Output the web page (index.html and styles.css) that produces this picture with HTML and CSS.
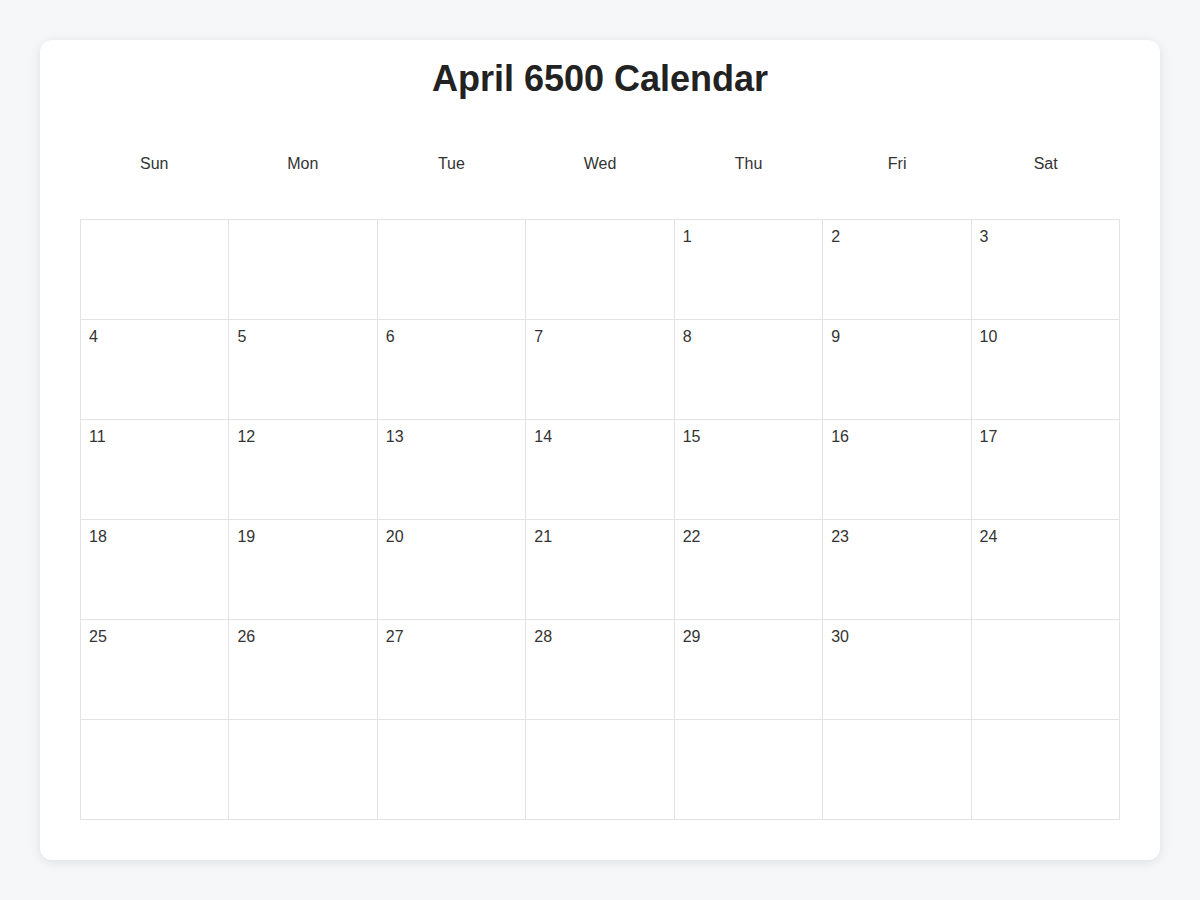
FILE: index.html
```html
<!DOCTYPE html>
<html lang="en">
<head>
<meta charset="utf-8">
<title>April 6500 Calendar</title>
<link rel="stylesheet" href="styles.css">
</head>
<body>
<div class="card">
  <h1 class="title">April 6500 Calendar</h1>
  <div class="weekdays">
    <div class="weekday">Sun</div>
    <div class="weekday">Mon</div>
    <div class="weekday">Tue</div>
    <div class="weekday">Wed</div>
    <div class="weekday">Thu</div>
    <div class="weekday">Fri</div>
    <div class="weekday">Sat</div>
  </div>
  <div class="grid">
    <div class="cell"></div><div class="cell"></div><div class="cell"></div><div class="cell"></div>
    <div class="cell">1</div><div class="cell">2</div><div class="cell">3</div>
    <div class="cell">4</div><div class="cell">5</div><div class="cell">6</div><div class="cell">7</div>
    <div class="cell">8</div><div class="cell">9</div><div class="cell">10</div>
    <div class="cell">11</div><div class="cell">12</div><div class="cell">13</div><div class="cell">14</div>
    <div class="cell">15</div><div class="cell">16</div><div class="cell">17</div>
    <div class="cell">18</div><div class="cell">19</div><div class="cell">20</div><div class="cell">21</div>
    <div class="cell">22</div><div class="cell">23</div><div class="cell">24</div>
    <div class="cell">25</div><div class="cell">26</div><div class="cell">27</div><div class="cell">28</div>
    <div class="cell">29</div><div class="cell">30</div><div class="cell"></div>
    <div class="cell"></div><div class="cell"></div><div class="cell"></div><div class="cell"></div>
    <div class="cell"></div><div class="cell"></div><div class="cell"></div>
  </div>
</div>
</body>
</html>
```
FILE: styles.css
```css
* { box-sizing: border-box; }
html, body {
  margin: 0;
  padding: 0;
}
body {
  background: #f6f7f9;
  font-family: "Liberation Sans", Arial, sans-serif;
  font-size: 16px;
  color: #333;
  padding: 40px;
}
.card {
  background: #fff;
  border-radius: 12px;
  box-shadow: 0 2px 12px rgba(0, 0, 0, 0.1);
  padding: 17px 40px 40px;
}
.title {
  margin: 0;
  font-size: 36px;
  line-height: 44px;
  font-weight: bold;
  color: #222;
  text-align: center;
}
.weekdays {
  display: grid;
  grid-template-columns: repeat(7, 1fr);
  margin-top: 34px;
  margin-bottom: 26px;
}
.weekday {
  text-align: center;
  padding: 20px 0;
  line-height: 18px;
  color: #333;
}
.grid {
  display: grid;
  grid-template-columns: repeat(7, 1fr);
  grid-auto-rows: 100px;
  border-top: 1px solid #e3e3e3;
  border-left: 1px solid #e3e3e3;
}
.cell {
  border-right: 1px solid #e3e3e3;
  border-bottom: 1px solid #e3e3e3;
  padding: 8px 8px;
  line-height: 18px;
  color: #333;
}
```
